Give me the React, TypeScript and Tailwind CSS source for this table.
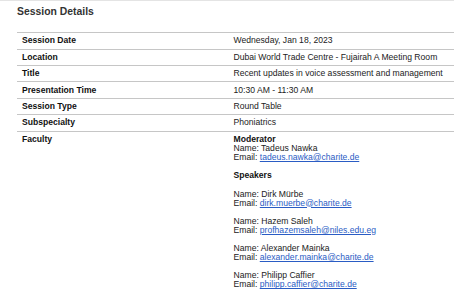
import React from "react";

const rows: [string, string][] = [
  ["Session Date", "Wednesday, Jan 18, 2023"],
  ["Location", "Dubai World Trade Centre - Fujairah A Meeting Room"],
  ["Title", "Recent updates in voice assessment and management"],
  ["Presentation Time", "10:30 AM - 11:30 AM"],
  ["Session Type", "Round Table"],
  ["Subspecialty", "Phoniatrics"],
];

const speakers: [string, string][] = [
  ["Dirk Mürbe", "dirk.muerbe@charite.de"],
  ["Hazem Saleh", "profhazemsaleh@niles.edu.eg"],
  ["Alexander Mainka", "alexander.mainka@charite.de"],
  ["Philipp Caffier", "philipp.caffier@charite.de"],
];

function Mail({ addr }: { addr: string }) {
  return (
    <div>
      Email: <a className="text-[#2a5cc4] underline underline-offset-1" href="#">{addr}</a>
    </div>
  );
}

export default function App() {
  return (
    <div
      className="w-[454px] h-[293px] overflow-hidden bg-white border-t border-[#e4e4e4] text-[#1a1a1a]"
      style={{ fontFamily: '"Liberation Sans", Arial, sans-serif' }}
    >
      <div className="pl-[17px] pt-[5px] text-[10.4px] leading-[12px] font-bold text-[#333]">
        Session Details
      </div>
      <div className="ml-[17px] mt-[14.3px] w-[437px] text-[8.6px] border-b border-[#c6c6c6]">
        {rows.map(([k, v]) => (
          <div key={k} className="flex h-[16.4px] items-center border-t border-[#c6c6c6] leading-[9.1px]">
            <div className="w-[211px] pl-[5px] font-bold text-[#111]">{k}</div>
            <div className="flex-1 pl-[5.5px] text-[#222]">{v}</div>
          </div>
        ))}
        <div className="flex border-t border-[#c6c6c6] leading-[9.1px] pt-[3.3px] pb-[3.6px]">
          <div className="w-[211px] pl-[5px] font-bold text-[#111]">Faculty</div>
          <div className="flex-1 pl-[5.5px] text-[#222]">
            <div className="font-bold text-[#111]">Moderator</div>
            <div>Name: Tadeus Nawka</div>
            <Mail addr="tadeus.nawka@charite.de" />
            <div className="h-[9.1px]" />
            <div className="font-bold text-[#111]">Speakers</div>
            {speakers.map(([n, e]) => (
              <div key={n}>
                <div className="h-[9.1px]" />
                <div>Name: {n}</div>
                <Mail addr={e} />
              </div>
            ))}
          </div>
        </div>
      </div>
    </div>
  );
}
